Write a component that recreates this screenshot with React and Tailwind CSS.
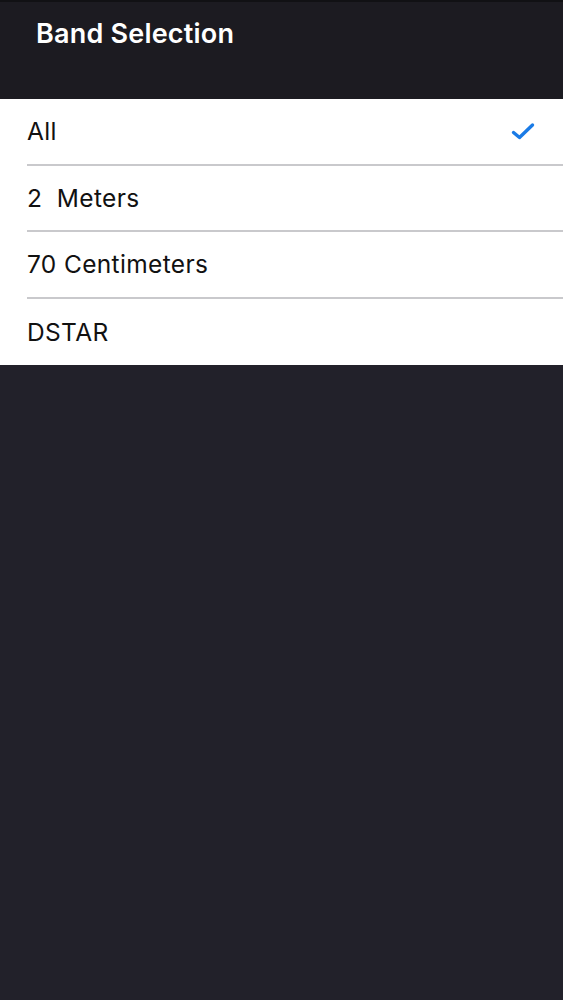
import React from 'react';

const bands = ['All', '2  Meters', '70 Centimeters', 'DSTAR'];

const App = () => {
    const selected = 'All';

    return (
        <div className="min-h-screen w-full bg-[#22212a] font-['Inter','Liberation_Sans',sans-serif]">
            {/* Barre de titre */}
            <div className="h-[99px] bg-[#1c1b21] border-t-2 border-[#111114] pl-9 pt-4">
                <h1 className="text-[27px] font-semibold text-white tracking-[0.2px] leading-8">
                    Band Selection
                </h1>
            </div>

            {/* Liste des bandes */}
            <div className="bg-white pl-[27px]">
                {bands.map((band, i) => (
                    <div
                        key={band}
                        className={`h-[66.5px] flex items-center justify-between pr-7 whitespace-pre ${
                            i < bands.length - 1 ? 'border-b-2 border-[#c9c9cc]' : ''
                        }`}
                    >
                        <span className="text-[24.5px] text-[#111] leading-none tracking-[0.35px]">{band}</span>
                        {band === selected && (
                            <svg width="24" height="20" viewBox="0 0 24 20" fill="none">
                                <path
                                    d="M2.5 11.5 L8.5 16.5 L21.5 4"
                                    stroke="#1a7be6"
                                    strokeWidth="3.4"
                                    strokeLinecap="round"
                                    strokeLinejoin="round"
                                />
                            </svg>
                        )}
                    </div>
                ))}
            </div>
        </div>
    );
};

export default App;
